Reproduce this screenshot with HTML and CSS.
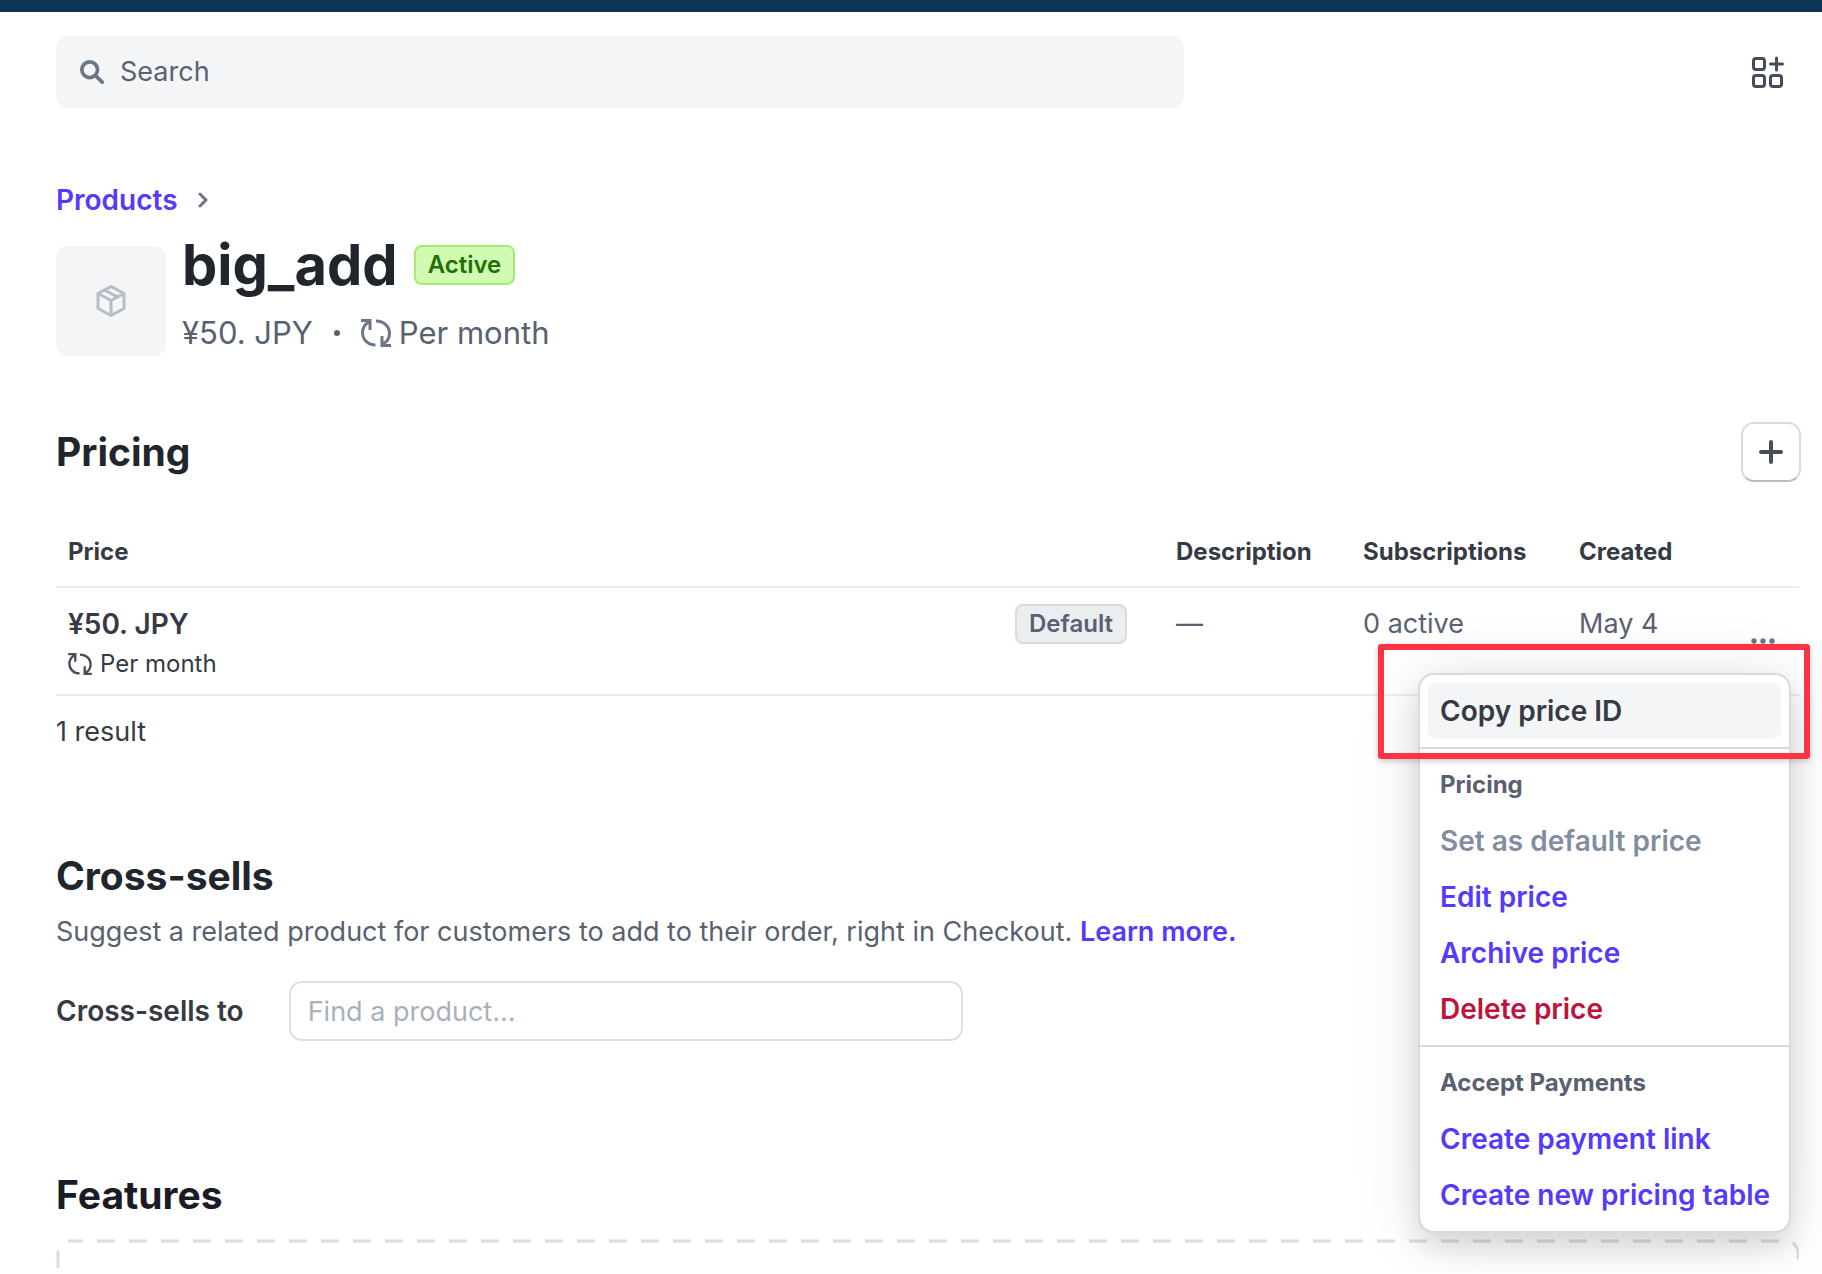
FILE: index.html
```
<!DOCTYPE html>
<html lang="en">
<head>
	<meta charset="utf-8">
	<title>big_add - Products</title>
	<link rel="stylesheet" href="styles.css">
</head>
<body>
	<svg class="sprite" aria-hidden="true">
		<symbol id="icon-recurring" viewBox="0 0 30 28">
			<path d="M0 1.500h9v9.500M8.500 2.500C4 5 1.500 9 1.500 13.500c0 7 5.500 12.500 13 12.500" />
			<path d="M30 26.500h-9v-9.500M21.500 25.500c4.500-2.500 7-6.500 7-11C28.500 7.500 23 2 15 2" />
		</symbol>
	</svg>

	<div class="topbar"></div>
	<header class="header">
		<label class="search">
			<svg class="search-icon" viewBox="0 0 26 26"><circle cx="10.500" cy="10.500" r="8.500" /><path d="M17 17l7 7" /></svg>
			<input type="search" placeholder="Search" aria-label="Search">
		</label>
		<button class="apps" type="button" aria-label="Apps">
			<svg viewBox="0 0 32 32"><rect x="1.500" y="2.500" width="11" height="11" rx="2.500" /><rect x="1.500" y="19.500" width="11" height="11" rx="2.500" /><rect x="18.500" y="19.500" width="11" height="11" rx="2.500" /><path d="M18.500 8h12M24.500 2v12" /></svg>
		</button>
	</header>

	<main class="main">
		<nav class="breadcrumb">
			<a href="#">Products</a>
			<svg viewBox="0 0 10 16"><path d="M2 2l6 6-6 6" /></svg>
		</nav>

		<div class="product">
			<div class="thumb">
				<svg viewBox="0 0 30 32"><path d="M15 1.500L28 8.500v15L15 30.500 2 23.500v-15zM2 8.500l13 7 13-7M15 15.500v15M8.500 5l13 7" /></svg>
			</div>
			<div class="product-info">
				<div class="product-title">
					<h1>big_add</h1>
					<span class="badge badge-green">Active</span>
				</div>
				<div class="product-price">
					<span>¥50. JPY</span>
					<span class="dot"></span>
					<span class="per"><svg class="recurring"><use href="#icon-recurring" /></svg>Per month</span>
				</div>
			</div>
		</div>

		<div class="section-head">
			<h2>Pricing</h2>
			<button class="add" type="button" aria-label="Add price">
				<svg viewBox="0 0 24 24"><path d="M12 2v20M2 12h20" /></svg>
			</button>
		</div>

		<table class="prices">
			<thead>
				<tr>
					<th>Price</th>
					<th class="col-desc">Description</th>
					<th class="col-subs">Subscriptions</th>
					<th class="col-created">Created</th>
					<th class="col-more"></th>
				</tr>
			</thead>
			<tbody>
				<tr>
					<td>
						<div class="price-line"><b>¥50. JPY</b><span class="badge">Default</span></div>
						<div class="price-per"><svg class="recurring"><use href="#icon-recurring" /></svg>Per month</div>
					</td>
					<td>—</td>
					<td>0 active</td>
					<td>May 4</td>
					<td class="more-cell">
						<button class="more" type="button" aria-label="More options">
							<svg viewBox="0 0 24 6"><circle cx="3" cy="3" r="2.700" /><circle cx="12" cy="3" r="2.700" /><circle cx="21" cy="3" r="2.700" /></svg>
						</button>
						<div class="menu">
							<div class="menu-group">
								<button class="menu-item current" type="button">Copy price ID</button>
							</div>
							<div class="menu-group">
								<div class="menu-label">Pricing</div>
								<button class="menu-item" type="button" disabled>Set as default price</button>
								<button class="menu-item" type="button">Edit price</button>
								<button class="menu-item" type="button">Archive price</button>
								<button class="menu-item danger" type="button">Delete price</button>
							</div>
							<div class="menu-group">
								<div class="menu-label">Accept Payments</div>
								<button class="menu-item" type="button">Create payment link</button>
								<button class="menu-item" type="button">Create new pricing table</button>
							</div>
						</div>
						<div class="marker"></div>
					</td>
				</tr>
			</tbody>
		</table>
		<p class="result">1 result</p>

		<section class="cross">
			<h2>Cross-sells</h2>
			<p>Suggest a related product for customers to add to their order, right in Checkout. <a href="#">Learn more.</a></p>
			<div class="field">
				<label for="cross-to">Cross-sells to</label>
				<input id="cross-to" type="text" placeholder="Find a product…">
			</div>
		</section>

		<section class="features">
			<h2>Features</h2>
			<div class="features-box">
				<svg><rect x="2" y="2" width="1741" height="189" rx="12" /></svg>
			</div>
		</section>
	</main>
</body>
</html>
```
FILE: styles.css
```
* {
	box-sizing: border-box;
}

body {
	margin: 0;
	background: #fff;
	color: #353a44;
	font-family: Inter, "Liberation Sans", sans-serif;
	font-size: 27px;
	line-height: 40px;
}

h1, h2, p {
	margin: 0;
}

h2 {
	font-size: 39px;
	line-height: 48px;
	font-weight: 700;
	color: #21252c;
}

a {
	color: #533afd;
	font-weight: 600;
	text-decoration: none;
}

button, input {
	font: inherit;
	color: inherit;
}

button {
	border: 0;
	padding: 0;
	background: none;
	cursor: pointer;
}

svg {
	display: block;
	fill: none;
	stroke: currentColor;
	stroke-linecap: round;
	stroke-linejoin: round;
}

.sprite {
	position: absolute;
	width: 0;
	height: 0;
}

.topbar {
	height: 12px;
	background: #103358;
}

/* header */
.header {
	display: flex;
	justify-content: space-between;
	align-items: center;
	padding: 24px 38px 0 56px;
}

.search {
	display: flex;
	align-items: center;
	gap: 16px;
	width: 66%;
	max-width: 1128px;
	height: 72px;
	padding: 0 24px;
	border-radius: 12px;
	background: #f4f5f7;
	color: #6c7688;
}

.search input {
	flex: 1;
	border: 0;
	padding: 0;
	background: none;
	outline: none;
}

.search input::placeholder {
	color: #596171;
	opacity: 1;
}

.search-icon {
	width: 24px;
	height: 24px;
	stroke-width: 4;
}

.apps {
	color: #474e5a;
}

.apps svg {
	width: 32px;
	height: 32px;
	stroke-width: 3;
}

.main {
	padding: 72px 23px 0 56px;
}

.breadcrumb {
	display: flex;
	align-items: center;
	gap: 20px;
	font-size: 28px;
	color: #6c7688;
}

.breadcrumb svg {
	width: 10px;
	height: 16px;
	stroke-width: 3;
}

/* product */
.product {
	display: flex;
	gap: 16px;
	padding-top: 13px;
}

.thumb {
	display: flex;
	align-items: center;
	justify-content: center;
	width: 110px;
	height: 110px;
	margin-top: 13px;
	border-radius: 12px;
	background: #f4f5f7;
	color: #b6bdc8;
}

.thumb svg {
	width: 30px;
	height: 32px;
	stroke-width: 3;
}

.product-title {
	display: flex;
	align-items: center;
	gap: 16px;
}

.product-title h1 {
	font-size: 56px;
	line-height: 64px;
	font-weight: 700;
	color: #21252c;
}

.badge {
	height: 40px;
	padding: 0 12px;
	border: 2px solid #d5dbe1;
	border-radius: 8px;
	background: #ebeef1;
	color: #596171;
	font-size: 24px;
	line-height: 36px;
	font-weight: 600;
}

.badge-green {
	border-color: #a6eb6f;
	background: #d1fab3;
	color: #217005;
}

.product-price {
	display: flex;
	align-items: center;
	gap: 21px;
	margin-top: 16px;
	font-size: 31px;
	color: #596171;
}

.dot {
	width: 6px;
	height: 6px;
	border-radius: 50%;
	background: #596171;
}

.per {
	display: flex;
	align-items: center;
	gap: 8px;
}

.recurring {
	width: 30px;
	height: 28px;
	stroke-width: 3;
	stroke-linecap: butt;
	stroke-linejoin: miter;
	color: #6c7688;
}

.section-head {
	display: flex;
	align-items: center;
	justify-content: space-between;
	margin: 66px -2px 0 0;
}

.add {
	display: flex;
	align-items: center;
	justify-content: center;
	width: 60px;
	height: 60px;
	border: 2px solid #d8dbe1;
	border-bottom-color: #b9bcc6;
	border-radius: 13px;
	color: #474e5a;
}

.add svg {
	width: 24px;
	height: 24px;
	stroke-width: 4;
}

/* prices table */
.prices {
	width: 100%;
	margin-top: 36px;
	border-collapse: separate;
	border-spacing: 0;
}

.prices th,
.prices td {
	padding: 18px 12px;
	border-bottom: 2px solid #ebeef1;
	text-align: left;
	vertical-align: top;
}

.prices th {
	font-size: 24px;
	line-height: 32px;
	font-weight: 700;
}

.prices td {
	padding: 16px 12px 10px;
	color: #596171;
}

.col-desc { width: 187px; }
.col-subs { width: 216px; }
.col-created { width: 172px; }
.col-more { width: 60px; }

.price-line {
	display: flex;
	justify-content: space-between;
	padding-right: 25px;
	color: #353a44;
}

.price-line b {
	font-size: 28px;
	font-weight: 600;
}

.price-per {
	display: flex;
	align-items: center;
	gap: 8px;
	font-size: 24px;
	color: #353a44;
}

.price-per .recurring {
	width: 24px;
	height: 22px;
	color: #474e5a;
}

.prices .more-cell {
	position: relative;
	padding: 12px;
	vertical-align: middle;
}

.more {
	display: block;
	color: #6c7688;
}

.more svg {
	width: 24px;
	height: 6px;
	fill: currentColor;
	stroke: none;
}

/* dropdown of the price row */
.menu {
	position: absolute;
	top: 85px;
	right: 8px;
	z-index: 1;
	width: 373px;
	border: 2px solid #d5dbe1;
	border-radius: 16px;
	background: #fff;
	box-shadow: 0 14px 28px rgba(0, 0, 0, .12), 0 4px 70px rgba(0, 0, 0, .1);
}

.menu-group {
	padding: 8px;
}

.menu-group + .menu-group {
	border-top: 2px solid #d5dbe1;
}

.menu-item,
.menu-label {
	display: block;
	width: 100%;
	padding: 8px 0 8px 12px;
	text-align: left;
	white-space: nowrap;
	font-size: 28px;
	font-weight: 600;
	color: #533afd;
}

.menu-label {
	font-size: 24px;
	font-weight: 700;
	color: #596171;
}

.menu-item.current {
	border-radius: 8px;
	background: #f4f5f7;
	color: #353a44;
}

.menu-item:disabled {
	color: #818da0;
}

.menu-item.danger {
	color: #c0123c;
}

.marker {
	position: absolute;
	top: 56px;
	right: -11px;
	z-index: 2;
	width: 432px;
	height: 115px;
	border: 6px solid #fb3344;
	border-radius: 3px;
	box-shadow: 0 2px 6px rgba(0, 0, 0, .2);
	pointer-events: none;
}

.result {
	margin-top: 16px;
}

/* cross-sells */
.cross {
	margin-top: 100px;
}

.cross p {
	margin-top: 12px;
	color: #596171;
}

.field {
	display: flex;
	align-items: center;
	gap: 45px;
	margin-top: 29px;
}

.field label {
	font-size: 28px;
	font-weight: 600;
}

.field input {
	flex: 0 1 674px;
	height: 60px;
	padding: 0 17px;
	border: 2px solid #dfdfdf;
	border-radius: 13px;
}

.field input::placeholder {
	color: #a9b0bc;
	opacity: 1;
}

.features {
	margin-top: 130px;
}

.features h2 {
	color: #1a1b25;
}

.features-box {
	height: 34px;
	margin-top: 20px;
	overflow: hidden;
}

.features-box svg {
	width: 100%;
	height: 200px;
	stroke: #d8dee4;
	stroke-width: 3;
	stroke-dasharray: 18 14;
	stroke-dashoffset: 5;
	stroke-linecap: butt;
}

.features-box rect {
	width: calc(100% - 3px);
}
```
